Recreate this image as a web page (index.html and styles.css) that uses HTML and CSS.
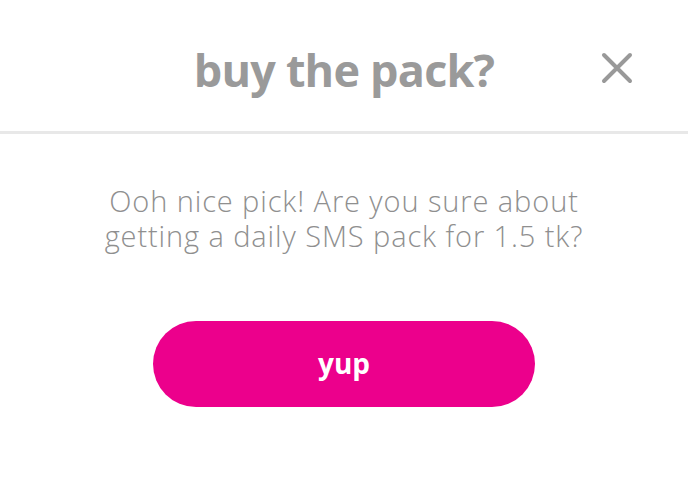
FILE: index.html
```html
<!DOCTYPE html>
<html>
<head>
<meta charset="utf-8">
<link rel="stylesheet" href="styles.css">
</head>
<body>
<div class="dialog">
  <header class="head">
    <span class="spacer"></span>
    <h1 class="title">buy the pack?</h1>
    <button class="close" aria-label="close">
      <svg width="32" height="32" viewBox="0 0 32 32"><path d="M3 3 L29 29 M29 3 L3 29" stroke="#999" stroke-width="4" stroke-linecap="round" fill="none"/></svg>
    </button>
  </header>
  <main class="content">
    <p class="msg">Ooh nice pick! Are you sure about<br>getting a daily SMS pack for 1.5 tk?</p>
    <button class="yup">yup</button>
  </main>
</div>
</body>
</html>
```
FILE: styles.css
```css
html, body { margin: 0; padding: 0; background: #fff; }
body { font-family: "Open Sans", sans-serif; width: 688px; height: 485px; overflow: hidden; }
.head {
  height: 131px;
  border-bottom: 3px solid #e8e8e8;
  display: grid;
  grid-template-columns: 1fr auto 1fr;
  align-items: center;
}
.title {
  margin: 0;
  font-size: 45px;
  font-weight: 700;
  color: #9a9a9a;
  letter-spacing: -0.8px;
  padding-top: 8px;
}
.close {
  justify-self: end;
  margin-right: 55px;
  background: none;
  border: 0;
  padding: 0;
  display: flex;
  margin-top: 4px;
}
.content { display: flex; flex-direction: column; align-items: center; }
.msg {
  margin: 49px 0 0;
  text-align: center;
  font-size: 29px;
  font-weight: 300;
  letter-spacing: 0.9px;
  line-height: 35px;
  color: #8f8f8f;
}
.yup {
  margin-top: 68px;
  width: 382px;
  height: 86px;
  border: 0;
  border-radius: 43px;
  background: #ec008c;
  color: #fff;
  font-family: "Open Sans", sans-serif;
  font-size: 28px;
  font-weight: 700;
  padding-bottom: 4px;
}
```
